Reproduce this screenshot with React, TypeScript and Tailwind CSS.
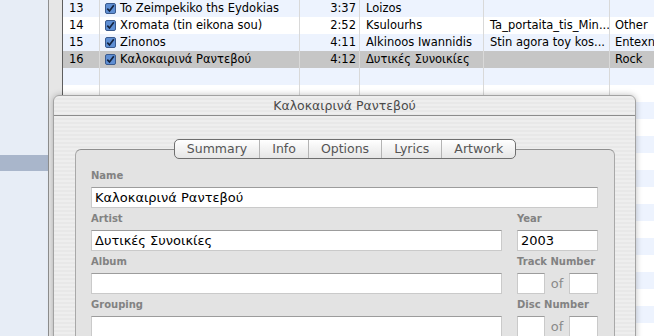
const rows = [
  { n: 13, name: "To Zeimpekiko ths Eydokias", time: "3:37", artist: "Loizos", album: "", genre: "" },
  { n: 14, name: "Xromata (tin eikona sou)", time: "2:52", artist: "Ksulourhs", album: "Ta_portaita_tis_Min...", genre: "Other" },
  { n: 15, name: "Zinonos", time: "4:11", artist: "Alkinoos Iwannidis", album: "Stin agora toy kos...", genre: "Entexno" },
  { n: 16, name: "Καλοκαιρινά Ραντεβού", time: "4:12", artist: "Δυτικές Συνοικίες", album: "", genre: "Rock" },
]

const font = { fontFamily: '"DejaVu Sans", "Noto Sans", sans-serif' }

function Check() {
  return (
    <svg width="11" height="11" viewBox="0 0 11 11" className="shrink-0">
      <rect x="0.5" y="0.5" width="10" height="10" rx="1.5" fill="#5f8fd4" stroke="#3a5a8e" />
      <path d="M2.3 5.6 L4.5 8 L8.8 2.2" fill="none" stroke="#13233f" strokeWidth="1.7" />
    </svg>
  )
}

function Field({ className = "", children }: { className?: string; children?: React.ReactNode }) {
  return (
    <div
      className={`h-[21px] bg-white border border-[#cacaca] border-t-[#9c9c9c] pl-[3px] text-[13px] leading-[19px] text-black ${className}`}
    >
      {children}
    </div>
  )
}

function Label({ children }: { children: React.ReactNode }) {
  return <div className="h-[14px] mb-[4px] text-[10px] font-bold leading-[14px] text-[#828282] whitespace-nowrap">{children}</div>
}

function NumPair() {
  return (
    <div className="flex items-center">
      <Field className="w-[28px]" />
      <div className="flex-1 text-center text-[13px] text-[#8a8a8a] leading-[21px]">of</div>
      <Field className="w-[29px]" />
    </div>
  )
}

export default function App() {
  const tabs = ["Summary", "Info", "Options", "Lyrics", "Artwork"]
  const allRows = Array.from({ length: 20 }, (_, i) => rows[i] ?? { n: 0, name: "", time: "", artist: "", album: "", genre: "" })

  return (
    <div className="relative w-[654px] h-[336px] overflow-hidden flex bg-white" style={font}>
      {/* source list */}
      <div className="w-[48px] shrink-0 h-full bg-[#e7edf6] flex flex-col">
        <div className="h-[155px]" />
        <div className="h-[16px] bg-[#a9b6cb]" />
      </div>
      <div className="w-[1px] shrink-0 h-full bg-[#8e8e8e]" />
      <div className="w-[13px] shrink-0 h-full bg-[#e6e6e6]" />
      <div className="w-[1px] shrink-0 h-full bg-[#5e5e5e]" />

      {/* track list */}
      <div className="flex-1 min-w-0 flex flex-col text-[11.5px] text-black">
        {allRows.map((r, i) => {
          const selected = r.n === 16
          const bg = selected ? "bg-[#c6c6c6]" : i % 2 === 0 ? "bg-[#edf3fe]" : "bg-white"
          return (
            <div key={i} className={`h-[17px] shrink-0 flex leading-[17px] ${bg}`}>
              <div className="w-[37px] shrink-0 pl-[6px] border-r border-[#d9d9d9]">{r.n || ""}</div>
              <div className="w-[200px] shrink-0 pl-[5px] flex items-center gap-[4px] border-r border-[#d9d9d9] whitespace-nowrap overflow-hidden">
                {r.n ? <Check /> : null}
                <span>{r.name}</span>
              </div>
              <div className="w-[60px] shrink-0 pr-[3px] text-right border-r border-[#d9d9d9]">{r.time}</div>
              <div className="w-[124px] shrink-0 pl-[6px] border-r border-[#d9d9d9] whitespace-nowrap overflow-hidden">{r.artist}</div>
              <div className="w-[126px] shrink-0 pl-[6px] border-r border-[#d9d9d9] whitespace-nowrap overflow-hidden">{r.album}</div>
              <div className="flex-1 min-w-0 pl-[5px] whitespace-nowrap overflow-hidden">{r.genre}</div>
            </div>
          )
        })}
      </div>

      {/* Get Info window */}
      <div className="absolute left-[53px] top-[95px] w-[583px] h-[260px] rounded-t-[6px] border border-[#a2a2a2] shadow-[0_0_6px_rgba(0,0,0,0.25)] bg-[repeating-linear-gradient(180deg,#eeeeee_0px,#eeeeee_2px,#e8e8e8_2px,#e8e8e8_4px)] flex flex-col">
        <div className="h-[20px] border-b border-[#8c8c8c] text-center text-[12.5px] leading-[19px] text-[#4a4a4a]">
          Καλοκαιρινά Ραντεβού
        </div>
        <div className="pt-[23px] pl-[21px] pr-[20px] flex flex-col">
          <div className="relative z-10 flex justify-center">
            <div className="flex h-[20px] rounded-[5px] border border-[#6f6f6f] bg-[linear-gradient(180deg,#ffffff,#f1f1f1_55%,#e6e6e6)] text-[12.5px] leading-[18px] text-[#555]">
              {tabs.map((t, i) => (
                <div key={t} className={`px-[12px] ${i < tabs.length - 1 ? "border-r border-[#b4b4b4]" : ""}`}>
                  {t}
                </div>
              ))}
            </div>
          </div>
          <div className="-mt-[10px] h-[200px] rounded-[6px] border border-[#a8a8a8] border-t-[#8f8f8f] bg-[#e3e3e3] pt-[19px] pl-[15px] pr-[16px] flex flex-col gap-[4px]">
            <div>
              <Label>Name</Label>
              <Field>Καλοκαιρινά Ραντεβού</Field>
            </div>
            <div className="flex gap-[15px]">
              <div className="flex-1">
                <Label>Artist</Label>
                <Field>Δυτικές Συνοικίες</Field>
              </div>
              <div className="w-[81px]">
                <Label>Year</Label>
                <Field>2003</Field>
              </div>
            </div>
            <div className="flex gap-[15px]">
              <div className="flex-1">
                <Label>Album</Label>
                <Field />
              </div>
              <div className="w-[81px]">
                <Label>Track Number</Label>
                <NumPair />
              </div>
            </div>
            <div className="flex gap-[15px]">
              <div className="flex-1">
                <Label>Grouping</Label>
                <Field />
              </div>
              <div className="w-[81px]">
                <Label>Disc Number</Label>
                <NumPair />
              </div>
            </div>
          </div>
        </div>
      </div>
    </div>
  )
}
